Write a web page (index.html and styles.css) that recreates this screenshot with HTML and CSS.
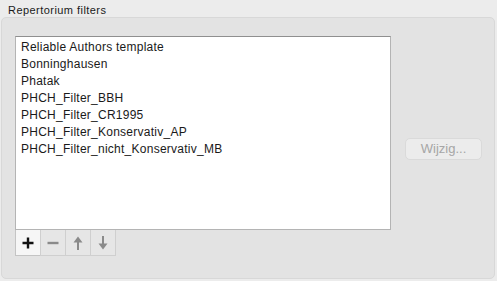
FILE: index.html
```html
<!DOCTYPE html>
<html>
<head>
<meta charset="utf-8">
<link rel="stylesheet" href="styles.css">
</head>
<body>
<div class="page">
  <div class="title">Repertorium filters</div>
  <div class="group">
    <div class="left">
      <div class="list">
        <div class="item">Reliable Authors template</div>
        <div class="item">Bonninghausen</div>
        <div class="item">Phatak</div>
        <div class="item">PHCH_Filter_BBH</div>
        <div class="item">PHCH_Filter_CR1995</div>
        <div class="item">PHCH_Filter_Konservativ_AP</div>
        <div class="item">PHCH_Filter_nicht_Konservativ_MB</div>
      </div>
      <div class="tools">
        <div class="tool active">
          <svg width="14" height="14" viewBox="0 0 14 14"><path d="M7 1.5v11M1.5 7h11" stroke="#111" stroke-width="2.4"/></svg>
        </div>
        <div class="tool">
          <svg width="14" height="14" viewBox="0 0 14 14"><path d="M1.5 7h11" stroke="#8a8a8a" stroke-width="2.4"/></svg>
        </div>
        <div class="tool">
          <svg width="14" height="16" viewBox="0 0 14 16"><path d="M7 3v12" stroke="#8a8a8a" stroke-width="2"/><path d="M2.5 7.5L7 1.5l4.5 6z" fill="#8a8a8a"/></svg>
        </div>
        <div class="tool">
          <svg width="14" height="16" viewBox="0 0 14 16"><path d="M7 1v12" stroke="#8a8a8a" stroke-width="2"/><path d="M2.5 8.5L7 14.5l4.5-6z" fill="#8a8a8a"/></svg>
        </div>
      </div>
    </div>
    <div class="right">
      <div class="btn">Wijzig...</div>
    </div>
  </div>
</div>
</body>
</html>
```
FILE: styles.css
```css
html, body {
  margin: 0;
  padding: 0;
  background: #ececec;
  font-family: "Liberation Sans", Arial, sans-serif;
  color: #1a1a1a;
}
.page {
  width: 497px;
  height: 281px;
  padding: 3px 2px 0 1px;
  box-sizing: border-box;
}
.title {
  font-size: 11px;
  line-height: 14px;
  letter-spacing: 0.45px;
  padding-left: 7px;
  height: 14px;
}
.group {
  margin-top: 0;
  height: 262px;
  box-sizing: border-box;
  background: #e3e3e3;
  border: 1px solid #d8d8d8;
  border-radius: 5px;
  display: flex;
  padding: 18px 0 0 13px;
}
.left {
  display: flex;
  flex-direction: column;
  width: 376px;
}
.list {
  height: 194px;
  box-sizing: border-box;
  background: #fff;
  border: 1px solid #b4b4b4;
  border-top-color: #8f8f8f;
  padding: 2px 0 0 5px;
}
.item {
  font-size: 12px;
  line-height: 17px;
  height: 17px;
  letter-spacing: 0.25px;
  white-space: nowrap;
}
.tools {
  display: flex;
}
.tool {
  width: 26px;
  height: 26px;
  box-sizing: border-box;
  border: 1px solid #cfcfcf;
  border-top: none;
  margin-right: -1px;
  background: #e6e6e6;
  display: flex;
  align-items: center;
  justify-content: center;
}
.tool.active {
  background: #f6f6f6;
  border-color: #c4c4c4;
}
.right {
  flex: 1;
  display: flex;
  justify-content: center;
  padding-top: 102px;
  padding-left: 2px;
}
.btn {
  width: 77px;
  height: 22px;
  box-sizing: border-box;
  border: 1px solid #dadada;
  border-radius: 5px;
  background: #ececec;
  color: #a6a6a6;
  font-size: 13px;
  line-height: 20px;
  text-align: center;
}
```
